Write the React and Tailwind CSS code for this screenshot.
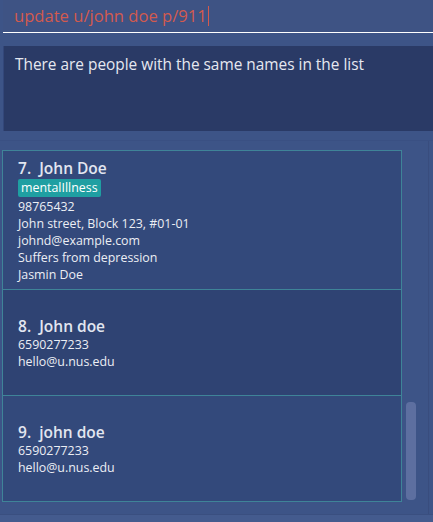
import React from "react";

const people = [
  {
    id: 7,
    name: "John Doe",
    tags: ["mentalIllness"],
    lines: [
      "98765432",
      "John street, Block 123, #01-01",
      "johnd@example.com",
      "Suffers from depression",
      "Jasmin Doe",
    ],
    height: "h-[140px]",
    bg: "bg-[#33497b]",
  },
  {
    id: 8,
    name: "John doe",
    tags: [],
    lines: ["6590277233", "hello@u.nus.edu"],
    height: "h-[107px]",
    bg: "bg-[#2f4373]",
  },
  {
    id: 9,
    name: "john doe",
    tags: [],
    lines: ["6590277233", "hello@u.nus.edu"],
    height: "h-[107px]",
    bg: "bg-[#33497b]",
  },
];

function PersonCard({ person }) {
  return (
    <div
      className={`${person.height} ${person.bg} border border-[#3f8498] flex flex-col justify-center pl-[15px] -mt-px first:mt-0`}
    >
      <div className="text-[15.5px] font-semibold text-[#e2e6f0] leading-[20px]">
        {person.id}.&nbsp;&nbsp;{person.name}
      </div>
      {person.tags.length > 0 && (
        <div className="flex gap-1 my-[1px]">
          {person.tags.map((t) => (
            <span
              key={t}
              className="bg-[#1f9fa2] text-white text-[12.4px] leading-[18px] px-[3px] rounded-[2px]"
            >
              {t}
            </span>
          ))}
        </div>
      )}
      {person.lines.map((l) => (
        <div key={l} className="text-[12.4px] leading-[17px] text-[#eceef4]">
          {l}
        </div>
      ))}
    </div>
  );
}

export default function App() {
  return (
    <div className="w-[433px] h-[522px] bg-[#3d5487] flex flex-col overflow-hidden font-['Segoe_UI','Open_Sans','Noto_Sans',sans-serif]">
      {/* command box */}
      <div className="h-[33px] ml-[3px] bg-[#3e5384] border-b border-white flex items-center pl-[11px] shrink-0">
        <span className="text-[16.6px] text-[#d35a4e]">update u/john doe p/911</span>
        <span className="w-px h-[20px] bg-[#d35a4e] ml-px" />
      </div>

      <div className="h-[13px] shrink-0" />

      {/* result display */}
      <div className="h-[85px] ml-[3px] bg-[#2a3a66] pl-[11px] pt-[7px] shrink-0 border-l border-[#33477a]">
        <p className="text-[15.4px] text-[#e6e8f0]">There are people with the same names in the list</p>
      </div>

      <div className="h-[9px] shrink-0" />

      {/* list area */}
      <div className="flex-1 flex border-t border-[#3a5083] min-h-0">
        <div className="w-[400px] ml-[2px] pt-[9px] flex flex-col">
          {people.map((p) => (
            <PersonCard key={p.id} person={p} />
          ))}
        </div>
        <div className="w-[26px] flex flex-col">
          <div className="flex-1 flex pt-[261px] pb-[14px] pl-[4px]">
            <div className="w-[10px] bg-[#5d6fa0] rounded-[4px]" />
          </div>
        </div>
        <div className="w-px bg-[#394d7e]" />
      </div>

      {/* status bar */}
      <div className="h-[8px] bg-[#445b8e] border-t border-[#3a4f80] shrink-0" />
    </div>
  );
}
